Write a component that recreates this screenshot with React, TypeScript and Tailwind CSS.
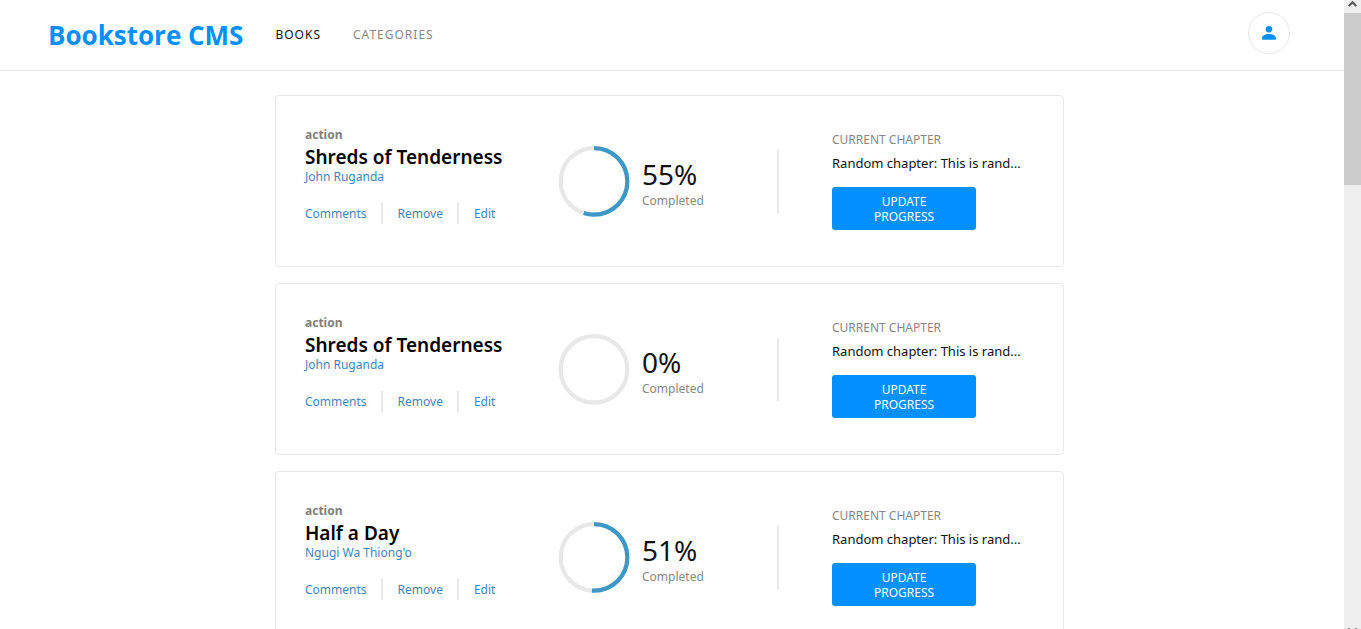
import React from 'react';

type Book = {
  id: number;
  category: string;
  title: string;
  author: string;
  progress: number;
  chapter: string;
};

const books: Book[] = [
  { id: 1, category: 'action', title: 'Shreds of Tenderness', author: 'John Ruganda', progress: 55, chapter: 'Random chapter: This is rand...' },
  { id: 2, category: 'action', title: 'Shreds of Tenderness', author: 'John Ruganda', progress: 0, chapter: 'Random chapter: This is rand...' },
  { id: 3, category: 'action', title: 'Half a Day', author: "Ngugi Wa Thiong'o", progress: 51, chapter: 'Random chapter: This is rand...' },
];

function Header() {
  return (
    <header className="flex h-[71px] shrink-0 items-center border-b border-[#e8e8e8] pl-12 pr-[54px]">
      <a href="#home" className="font-['Open_Sans',sans-serif] text-[26px] font-bold leading-8 text-[#0290ff]">
        Bookstore CMS
      </a>
      <nav className="ml-8 flex gap-8 text-xs leading-4 tracking-[1px]">
        <a href="#books" className="text-[#121212]">BOOKS</a>
        <a href="#categories" className="text-[#888]">CATEGORIES</a>
      </nav>
      <button
        type="button"
        aria-label="Account"
        className="mb-1 ml-auto flex size-[42px] items-center justify-center rounded-full border border-[#e8e8e8]"
      >
        <svg viewBox="0 0 14 14" className="size-[14px] fill-[#0290ff]" aria-hidden="true">
          <circle cx="7" cy="3.3" r="3.3" />
          <path d="M0 12.4C0 9.6 3.2 8 7 8s7 1.6 7 4.4c0 .9-.5 1.4-1.4 1.4H1.4C.5 13.8 0 13.3 0 12.4z" />
        </svg>
      </button>
    </header>
  );
}

function ProgressRing({ value }: { value: number }) {
  return (
    <svg viewBox="0 0 72 72" className="size-[72px] shrink-0" role="img" aria-label={`${value}%`}>
      <circle cx="36" cy="36.4" r="33.3" fill="none" stroke="#e8e8e8" strokeWidth="4.2" />
      {value > 0 && (
        <circle
          cx="36"
          cy="36.4"
          r="33.3"
          fill="none"
          stroke="#3e98c7"
          strokeWidth="4.2"
          pathLength="100"
          strokeDasharray={`${value} 100`}
          transform="rotate(-90 36 36.4)"
        />
      )}
    </svg>
  );
}

function BookCard({ book }: { book: Book }) {
  return (
    <li className="flex min-h-[172px] shrink-0 items-center rounded border border-[#e8e8e8] bg-white pl-[29px]">
      <section className="w-[253px] shrink-0 pb-[14px]">
        <p className="text-xs font-bold leading-5 text-[#808080]">{book.category}</p>
        <h2 className="text-[19px] font-semibold leading-6 text-black">{book.title}</h2>
        <p className="text-xs leading-4 text-[#4386bf]">{book.author}</p>
        <div className="mt-[18px] flex items-center text-xs leading-[21px] text-[#4386bf]">
          <button type="button" className="border-r-2 border-[#e8e8e8] pr-[14px]">Comments</button>
          <button type="button" className="border-r-2 border-[#e8e8e8] pl-[15px] pr-[14px]">Remove</button>
          <button type="button" className="pl-[15px]">Edit</button>
        </div>
      </section>
      <section className="flex w-[219px] shrink-0 items-center gap-3">
        <ProgressRing value={book.progress} />
        <div className="pt-[10px]">
          <p className="text-[28px] leading-[30px] text-[#121212]">{book.progress}%</p>
          <p className="text-xs leading-6 text-[#888]">Completed</p>
        </div>
      </section>
      <section className="flex items-center">
        <div className="h-[63px] w-[2px] bg-[#e8e8e8]" />
        <div className="ml-[53px]">
          <p className="text-xs leading-4 text-[#888]">CURRENT CHAPTER</p>
          <p className="mt-[5px] whitespace-nowrap text-[13px] leading-5 text-[#121212]">{book.chapter}</p>
          <button
            type="button"
            className="mt-[14px] w-36 rounded-[3px] bg-[#0290ff] px-8 pb-[6px] pt-[7px] text-xs leading-[15px] text-white"
          >
            UPDATE PROGRESS
          </button>
        </div>
      </section>
    </li>
  );
}

function Scrollbar() {
  return (
    <div className="flex w-[17px] shrink-0 flex-col bg-[#efefef]" aria-hidden="true">
      <svg viewBox="0 0 17 13" className="h-[13px] w-[17px] shrink-0">
        <path d="M4.8 6 8.5 2.3 12.2 6" fill="none" stroke="#5a5a5a" strokeWidth="2.2" />
      </svg>
      <div className="h-[172px] shrink-0 bg-[#cbcbcb]" />
      <svg viewBox="0 0 17 2" className="mt-auto h-[2px] w-[17px] shrink-0">
        <path d="M4 1h2v1H4zM11 1h2v1h-2z" fill="#8a8a8a" />
      </svg>
    </div>
  );
}

export default function App() {
  return (
    <div className="flex h-screen overflow-hidden bg-white font-['Noto_Sans',sans-serif]">
      <div className="flex min-w-0 flex-1 flex-col overflow-hidden">
        <Header />
        <main className="min-h-0 flex-1 overflow-hidden pr-[5px] pt-6">
          <ul className="mx-auto flex w-full max-w-[789px] flex-col gap-4">
            {books.map((book) => (
              <BookCard key={book.id} book={book} />
            ))}
          </ul>
        </main>
      </div>
      <Scrollbar />
    </div>
  );
}
